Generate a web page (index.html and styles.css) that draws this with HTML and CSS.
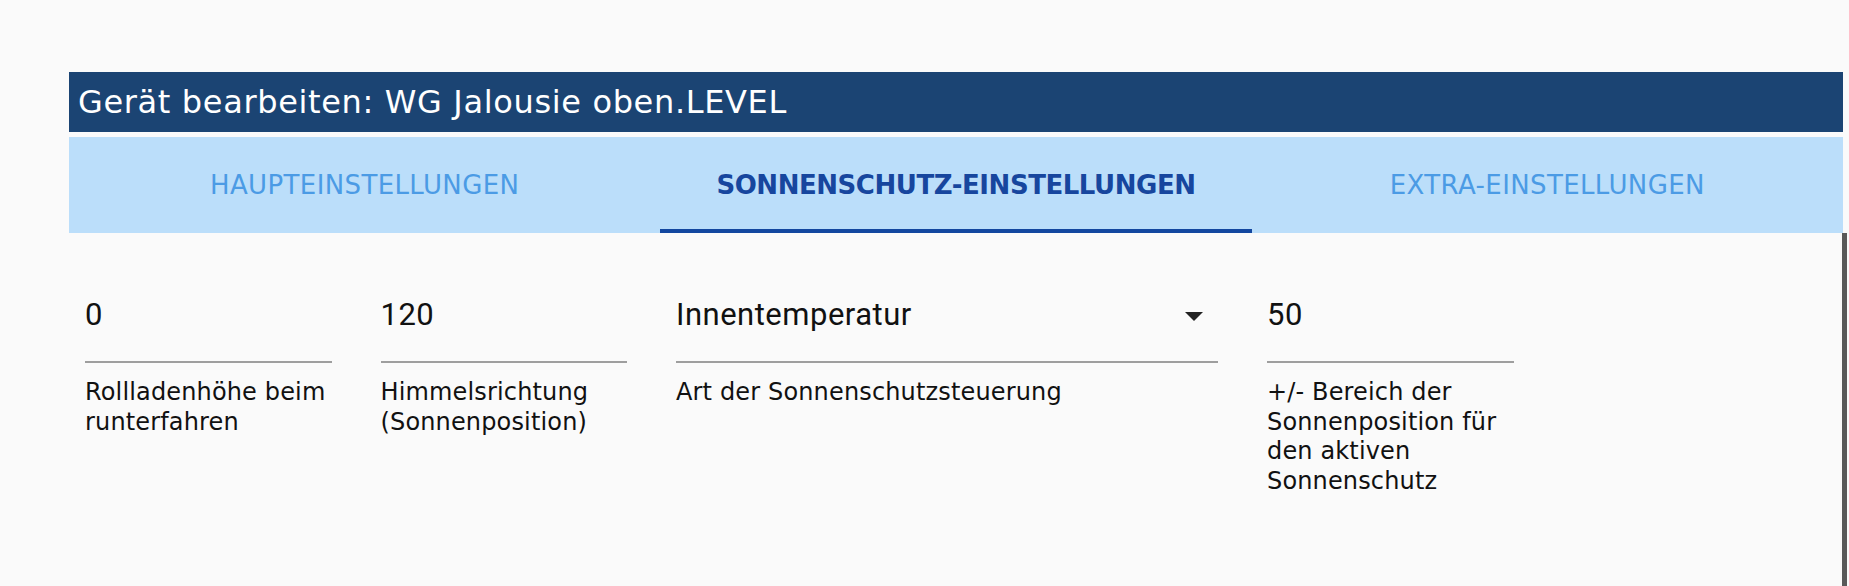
FILE: index.html
```html
<!DOCTYPE html>
<html lang="de">
<head>
  <meta charset="UTF-8" />
  <meta name="viewport" content="width=device-width, initial-scale=1.0"/>
  <title>Gerät bearbeiten</title>
  <link rel="stylesheet" href="styles.css">
</head>
<body>
  <div class="dialog">
    <div class="title">Gerät bearbeiten: WG Jalousie oben.LEVEL</div>

    <div class="tabs">
      <div class="tab">Haupteinstellungen</div>
      <div class="tab active">Sonnenschutz-Einstellungen</div>
      <div class="tab">Extra-Einstellungen</div>
    </div>

    <div class="content">
      <div class="fields">
        <div class="field">
          <div class="value">0</div>
          <div class="helper">Rollladenhöhe beim runterfahren</div>
        </div>
        <div class="field">
          <div class="value">120</div>
          <div class="helper">Himmelsrichtung (Sonnenposition)</div>
        </div>
        <div class="field wide">
          <div class="value select">
            <span>Innentemperatur</span>
            <span class="arrow"></span>
          </div>
          <div class="helper">Art der Sonnenschutzsteuerung</div>
        </div>
        <div class="field">
          <div class="value">50</div>
          <div class="helper">+/- Bereich der Sonnenposition für den aktiven Sonnenschutz</div>
        </div>
      </div>
      <div class="scrollbar"></div>
    </div>
  </div>
</body>
</html>
```

FILE: styles.css
```css
html, body {
  height: 100%;
}

body {
  margin: 0;
  background: #fafafa;
  font-family: "DejaVu Sans", "Noto Sans", sans-serif;
  color: #1a1a1a;
  overflow: hidden;
}

.dialog {
  margin: 72px 6px 0 69px;
  display: flex;
  flex-direction: column;
  height: calc(100% - 72px);
}

.title {
  height: 60px;
  background: #1b4473;
  color: #fff;
  font-size: 32px;
  line-height: 60px;
  padding-left: 9px;
  letter-spacing: 0.65px;
  white-space: nowrap;
}

.tabs {
  margin-top: 5px;
  height: 96px;
  background: #bbdefa;
  display: grid;
  grid-template-columns: repeat(3, 1fr);
}

.tab {
  display: flex;
  align-items: center;
  justify-content: center;
  text-transform: uppercase;
  font-size: 26px;
  letter-spacing: 0.38px;
  color: #4b9be5;
  border-bottom: 4px solid transparent;
  padding-top: 4px;
}

.tab.active {
  color: #17469e;
  font-weight: 600;
  letter-spacing: -0.45px;
  border-bottom-color: #13479f;
}

.content {
  flex: 1;
  display: flex;
  margin-right: -4px;
}

.fields {
  flex: 1;
  display: grid;
  grid-template-columns: repeat(6, 295.5px);
  align-items: start;
  padding-top: 62px;
}

.field {
  padding: 0 33px 0 16px;
}

.field.wide {
  grid-column: span 2;
}

.value {
  font-family: Roboto, "Noto Sans", sans-serif;
  font-size: 31px;
  letter-spacing: 0.5px;
  line-height: 40px;
  padding-bottom: 26px;
  border-bottom: 2px solid #9e9e9e;
  color: #111;
}

.select {
  display: flex;
  justify-content: space-between;
  align-items: center;
}

.arrow {
  width: 0;
  height: 0;
  border-left: 9.5px solid transparent;
  border-right: 9.5px solid transparent;
  border-top: 9.5px solid #222;
  margin-right: 15px;
  margin-top: 2px;
}

.helper {
  margin-top: 15px;
  font-size: 24px;
  letter-spacing: 0.15px;
  line-height: 29.5px;
  color: #111;
}

.scrollbar {
  width: 13px;
  background: #595959;
}
```
